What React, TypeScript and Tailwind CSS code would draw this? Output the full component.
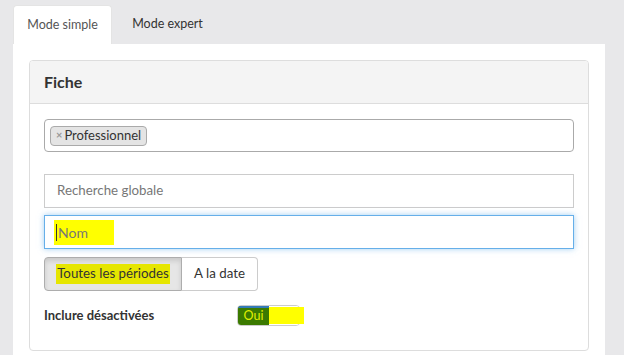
import React from "react";

export default function App() {
  return (
    <div
      className="w-[624px] h-[355px] bg-[#e8e8ea] pt-[5px] pl-[13px] overflow-hidden text-[#333]"
      style={{ fontFamily: "Lato, 'Open Sans', sans-serif" }}
    >
      <div className="flex h-[39px]">
        <div className="w-[99px] bg-white rounded-t-[4px] border border-b-0 border-[#e4e4e4] flex items-center justify-center text-[12.5px] text-[#555]">
          Mode simple
        </div>
        <div className="w-[111px] flex items-center justify-center text-[12.5px] text-[#333]">
          Mode expert
        </div>
      </div>
      <div className="w-[592px] h-[320px] bg-white pt-[16px] pl-[16px]">
        <div className="w-[560px] border border-[#ddd] rounded-[4px] overflow-hidden">
          <div className="h-[43px] bg-[#f4f4f4] border-b border-[#ddd] flex items-center pl-[14px] font-bold text-[16px] text-[#333]">
            Fiche
          </div>
          <div className="px-[14px] pt-[15px] pb-[24px] flex flex-col">
            <div className="h-[33px] border border-[#aaa] rounded-[4px] flex items-center pl-[5px]">
              <div className="h-[20px] bg-[#e4e4e4] border border-[#aaa] rounded-[4px] flex items-center px-[5px] text-[13px] text-[#333]">
                <span className="text-[#999] text-[11px] mr-[2px] font-bold">×</span>
                Professionnel
              </div>
            </div>
            <div className="h-[34px] mt-[22px] border border-[#ccc] flex items-center pl-[12px] text-[13.3px] text-[#777]">
              Recherche globale
            </div>
            <div className="h-[34px] mt-[7px] border border-[#66afe9] shadow-[0_0_6px_rgba(102,175,233,0.6)] flex items-center pl-[9px] text-[14px]">
              <span className="bg-[#ffff00] pl-[2px] pr-[26px] py-[2px] text-[#777] flex items-center">
                <span className="w-px h-[17px] bg-[#333] mr-[1px]"></span>
                Nom
              </span>
            </div>
            <div className="mt-[8px] flex h-[34px]">
              <div className="w-[138px] bg-[#e6e6e6] border border-[#adadad] rounded-l-[4px] shadow-[inset_0_3px_5px_rgba(0,0,0,0.125)] flex items-center justify-center text-[13.3px]">
                <span className="bg-[#e6e600] px-[1px]">Toutes les périodes</span>
              </div>
              <div className="w-[76px] bg-white border border-l-0 border-[#ccc] rounded-r-[4px] flex items-center justify-center text-[13.3px]">
                A la date
              </div>
            </div>
            <div className="mt-[14px] flex items-center h-[21px]">
              <div className="w-[193px] font-bold text-[13px] text-[#333]">Inclure désactivées</div>
              <div className="relative">
                <div className="w-[63px] h-[21px] border border-[#ccc] rounded-[4px] overflow-hidden flex">
                  <div className="w-[31px] bg-[#3b7a00] text-[#e0f000] text-[12.5px] flex items-center justify-center border-t-[2px] border-[#337ab7]">
                    Oui
                  </div>
                  <div className="flex-1 bg-white"></div>
                </div>
                <div className="absolute left-[32px] top-[2px] w-[35px] h-[17px] bg-[#ffff00]"></div>
              </div>
            </div>
          </div>
        </div>
      </div>
    </div>
  );
}
